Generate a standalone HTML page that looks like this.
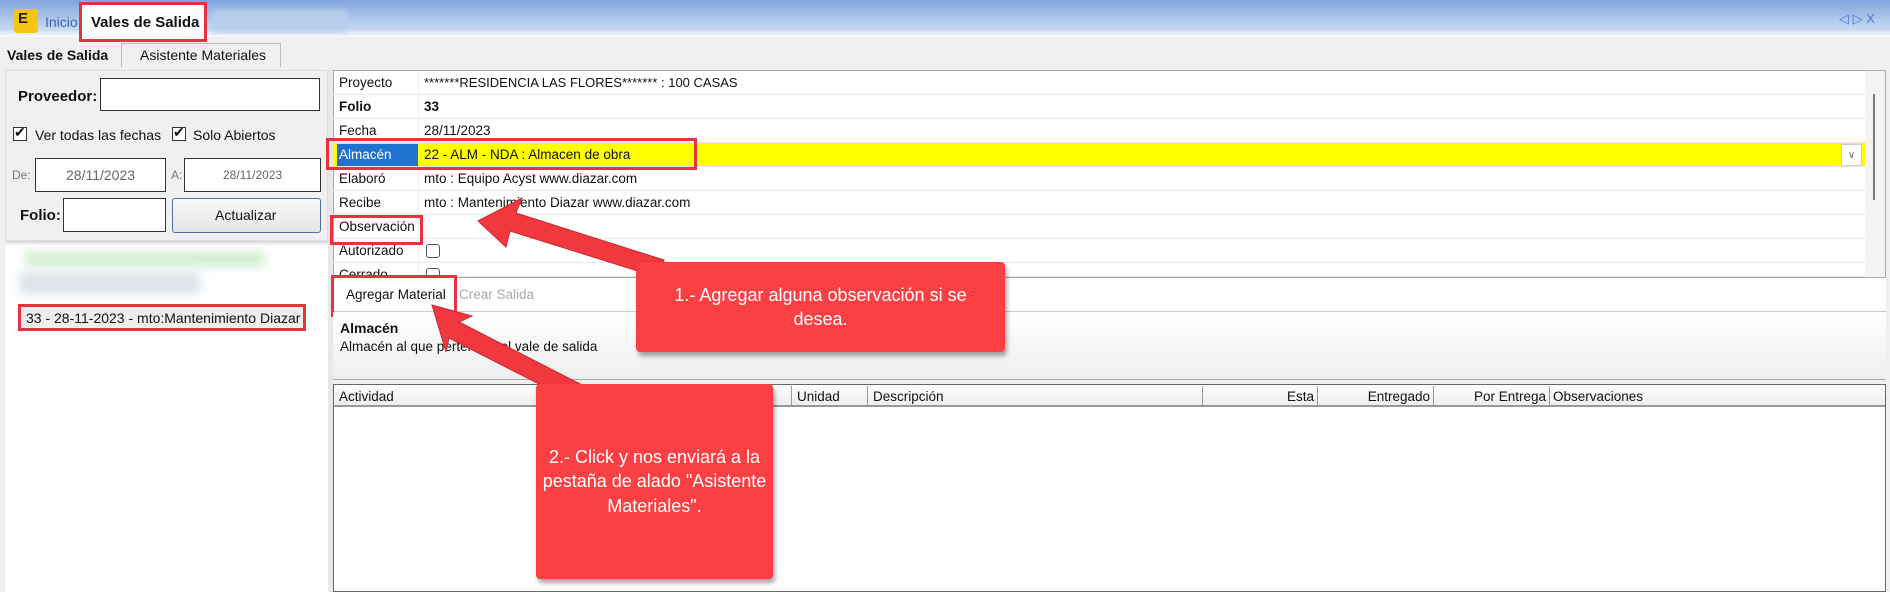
<!DOCTYPE html>
<html><head><meta charset="utf-8"><style>
*{margin:0;padding:0;box-sizing:border-box}
body{width:1890px;height:592px;overflow:hidden;background:#f0f0f0;font-family:"Liberation Sans",Arial,sans-serif;font-size:13.5px;color:#111;position:relative}
.a{position:absolute}
.t{position:absolute;white-space:nowrap}
.box{position:absolute;background:#fff;border:1px solid #333}
.rb{position:absolute;border:3px solid #e8323c}
.row{position:absolute;left:333px;width:1532px;height:24px;border-bottom:1px solid #e8e8e8}
.lab{position:absolute;left:6px;top:4px}
.val{position:absolute;left:91px;top:4px}
.cb{position:absolute;width:14px;height:14px;border:1px solid #333;background:#fff}
.call{position:absolute;background:#fb4044;color:#fff;font-size:18px;text-align:center;border-radius:4px;box-shadow:2px 4px 5px rgba(0,0,0,.35);display:flex;align-items:center;justify-content:center;line-height:1.35}
.gh{position:absolute;top:386px;height:21px;border-right:1px solid #999;padding-top:3px}
</style></head><body>
<div class="a" style="left:0;top:0;width:1890px;height:37px;background:linear-gradient(#7ea5de,#c9daf2 80%,#fff)"></div>
<div class="a" style="left:14px;top:9px;width:24px;height:24px;background:#f6c514;border-radius:3px"></div>
<div class="t" style="left:18px;top:10px;font-weight:bold;font-size:15px;color:#222">E</div>
<div class="t" style="left:45px;top:14px;color:#3c66b5;font-size:14px">Inicio</div>
<div class="a" style="left:82px;top:5px;width:123px;height:34px;background:#fff"></div>
<div class="t" style="left:91px;top:14px;font-weight:bold;font-size:15px">Vales de Salida</div>
<div class="rb" style="left:79px;top:2px;width:128px;height:40px"></div>
<div class="a" style="left:212px;top:10px;width:135px;height:22px;background:#b8cdec;filter:blur(3px)"></div>
<div class="t" style="left:1839px;top:11px;color:#4a78c8;font-size:13px">◁ ▷ X</div>
<div class="t" style="left:7px;top:47px;font-weight:bold;font-size:14px">Vales de Salida</div>
<div class="a" style="left:121px;top:43px;width:160px;height:24px;border:1px solid #bbb;border-bottom:none"></div>
<div class="t" style="left:140px;top:47px;font-size:14px">Asistente Materiales</div>
<div class="a" style="left:5px;top:70px;width:323px;height:171px;border:1px solid #ddd;box-shadow:1px 1px 2px #ccc"></div>
<div class="t" style="left:18px;top:88px;font-weight:bold;font-size:15px">Proveedor:</div>
<div class="box" style="left:100px;top:78px;width:220px;height:33px"></div>
<div class="cb" style="left:13px;top:127px"></div><div class="t" style="left:14px;top:124px;font-size:14px">✔</div>
<div class="t" style="left:35px;top:127px;font-size:14px">Ver todas las fechas</div>
<div class="cb" style="left:172px;top:127px"></div><div class="t" style="left:173px;top:124px;font-size:14px">✔</div>
<div class="t" style="left:193px;top:127px;font-size:14px">Solo Abiertos</div>
<div class="t" style="left:12px;top:168px;color:#777;font-size:12px">De:</div>
<div class="box" style="left:35px;top:158px;width:131px;height:34px"></div>
<div class="t" style="left:66px;top:167px;color:#666;font-size:14px">28/11/2023</div>
<div class="t" style="left:171px;top:168px;color:#777;font-size:12px">A:</div>
<div class="box" style="left:184px;top:158px;width:137px;height:34px"></div>
<div class="t" style="left:223px;top:168px;color:#666;font-size:12px">28/11/2023</div>
<div class="t" style="left:20px;top:207px;font-weight:bold;font-size:15px">Folio:</div>
<div class="box" style="left:63px;top:198px;width:103px;height:34px"></div>
<div class="a" style="left:172px;top:198px;width:149px;height:35px;border:1px solid #4a6fa5;border-radius:3px;background:linear-gradient(#fafafa,#e4e4e4)"></div>
<div class="t" style="left:215px;top:207px;font-size:14px">Actualizar</div>
<div class="a" style="left:5px;top:245px;width:323px;height:347px;background:#fff"></div>
<div class="a" style="left:25px;top:252px;width:240px;height:14px;background:#cfeccc;filter:blur(5px)"></div>
<div class="a" style="left:20px;top:272px;width:180px;height:22px;background:#dde3ea;filter:blur(5px)"></div>
<div class="a" style="left:18px;top:305px;width:287px;height:25px;background:#eee"></div>
<div class="t" style="left:26px;top:310px;font-size:14px">33 - 28-11-2023 - mto:Mantenimiento Diazar</div>
<div class="rb" style="left:18px;top:304px;width:288px;height:27px"></div>
<div class="a" style="left:328px;top:68px;width:5px;height:524px;background:#e8e8e8"></div>
<div class="a" style="left:333px;top:70px;width:1553px;height:208px;background:#fff;border:1px solid #aaa"></div>
<div class="a" style="left:418px;top:71px;width:1px;height:206px;background:#eee"></div>
<div class="row" style="top:71px"><span class="lab">Proyecto</span><span class="val" style="font-size:13px">*******RESIDENCIA LAS FLORES******* : 100 CASAS</span></div>
<div class="row" style="top:95px"><b class="lab">Folio</b><b class="val">33</b></div>
<div class="row" style="top:119px"><span class="lab">Fecha</span><span class="val">28/11/2023</span></div>
<div class="row" style="top:143px;background:#ffff00"><span class="a" style="left:4px;top:1px;width:81px;height:22px;background:#1e73d0"></span><span class="lab" style="color:#fff">Almacén</span><span class="val">22 - ALM - NDA : Almacen de obra</span><span class="a" style="left:1508px;top:1px;width:21px;height:22px;background:#fff;border:1px solid #ccc;font-size:10px;color:#666;text-align:center;padding-top:5px">∨</span></div>
<div class="row" style="top:167px"><span class="lab">Elaboró</span><span class="val">mto : Equipo Acyst www.diazar.com</span></div>
<div class="row" style="top:191px"><span class="lab">Recibe</span><span class="val">mto : Mantenimiento Diazar www.diazar.com</span></div>
<div class="row" style="top:215px"><span class="lab">Observación</span></div>
<div class="row" style="top:239px"><span class="lab">Autorizado</span><span class="cb" style="left:93px;top:5px;border-radius:3px;border-color:#555"></span></div>
<div class="row" style="top:263px;height:14px;overflow:hidden"><span class="lab">Cerrado</span><span class="cb" style="left:93px;top:5px;border-radius:3px;border-color:#555"></span></div>
<div class="a" style="left:1865px;top:71px;width:20px;height:206px;background:#f4f4f4"></div>
<div class="a" style="left:1873px;top:94px;width:2px;height:106px;background:#777"></div>
<div class="rb" style="left:326px;top:138px;width:371px;height:32px"></div>
<div class="rb" style="left:330px;top:215px;width:93px;height:30px"></div>
<div class="a" style="left:333px;top:278px;width:1553px;height:34px;background:#fff;border-bottom:1px solid #ccc"></div>
<div class="t" style="left:346px;top:287px">Agregar Material</div>
<div class="t" style="left:459px;top:287px;color:#aaa">Crear Salida</div>
<div class="rb" style="left:331px;top:275px;width:126px;height:42px"></div>
<div class="a" style="left:333px;top:312px;width:1553px;height:68px;background:linear-gradient(#fff,#eee);border-bottom:1px solid #aaa"></div>
<div class="t" style="left:340px;top:320px;font-weight:bold;font-size:14px">Almacén</div>
<div class="t" style="left:340px;top:339px">Almacén al que pertenece el vale de salida</div>
<div class="a" style="left:333px;top:384px;width:1553px;height:208px;background:#fff;border:1px solid #666"></div>
<div class="a" style="left:334px;top:385px;width:1551px;height:22px;background:linear-gradient(#fff,#eee);border-bottom:2px solid #999"></div>
<div class="gh" style="left:334px;width:458px;padding-left:5px">Actividad</div>
<div class="gh" style="left:792px;width:76px;padding-left:5px">Unidad</div>
<div class="gh" style="left:868px;width:335px;padding-left:5px">Descripción</div>
<div class="gh" style="left:1203px;width:115px;text-align:right;padding-right:3px">Esta</div>
<div class="gh" style="left:1318px;width:116px;text-align:right;padding-right:3px">Entregado</div>
<div class="gh" style="left:1434px;width:116px;text-align:right;padding-right:3px">Por Entrega</div>
<div class="gh" style="left:1550px;width:120px;border:none;padding-left:3px">Observaciones</div>
<svg class="a" style="left:0;top:0" width="1890" height="592">
<g fill="#f0383e" stroke="#c82a30" stroke-width="1">
<polygon points="478,221 522,198 516,213 664,260 660,278 510,231 506,247"/>
<polygon points="432,305 472,316 459,322 592,390 582,406 449,338 446,352"/>
</g></svg>
<div class="call" style="left:636px;top:262px;width:369px;height:90px">1.- Agregar alguna observación si se<br>desea.</div>
<div class="call" style="left:536px;top:384px;width:237px;height:195px">2.- Click y nos enviará a la<br>pestaña de alado "Asistente<br>Materiales".</div>
</body></html>
